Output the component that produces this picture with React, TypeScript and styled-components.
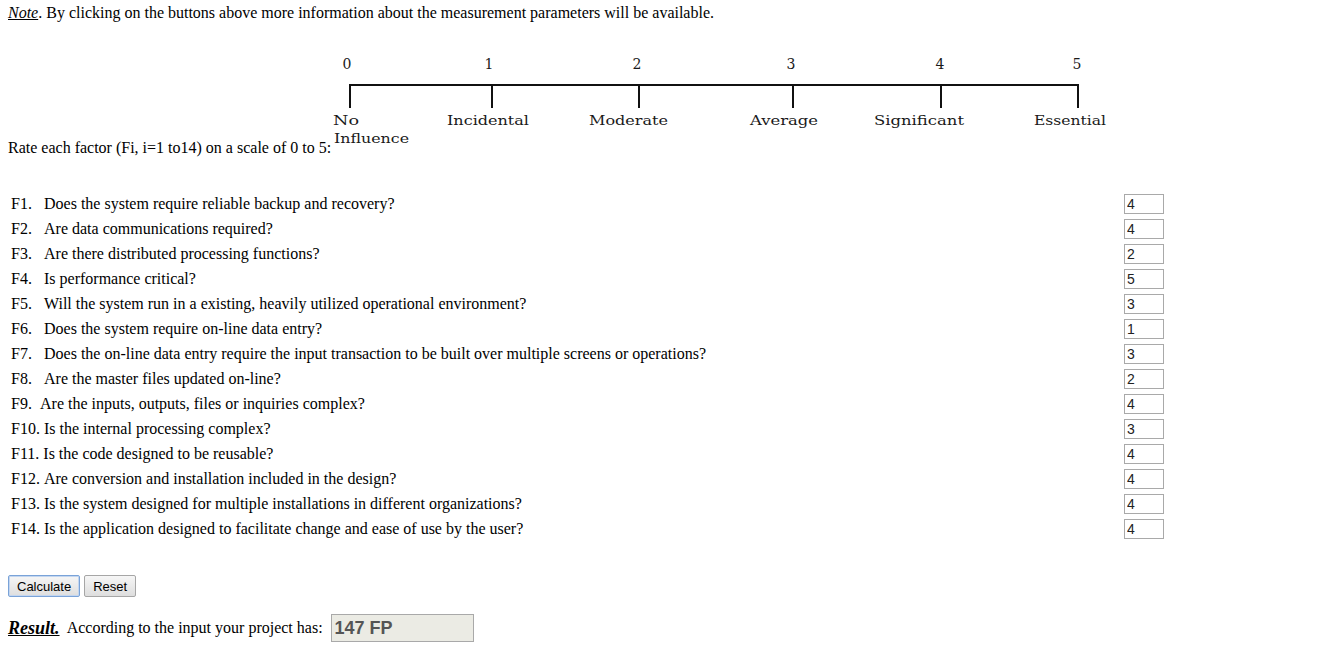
import React from "react";
import styled, { createGlobalStyle } from "styled-components";

const Global = createGlobalStyle`
  html, body { margin: 0; padding: 0; background: #fff; }
  body {
    padding: 4px 8px 0 8px;
    font-family: "Liberation Serif", "Times New Roman", serif;
    font-size: 16px;
    color: #000;
  }
`;

const Page = styled.div`
  width: 1322px;
`;

const Para = styled.p`
  margin: 0;
  line-height: normal;
`;

const NoteLabel = styled.span`
  font-style: italic;
  text-decoration: underline;
`;

const RateLine = styled.p`
  margin: 29px 0 0 0;
  line-height: normal;
  white-space: nowrap;
`;

const ScaleSvg = styled.svg`
  display: inline-block;
  vertical-align: baseline;
  overflow: visible;
`;

const ScaleText = styled.text<{ $size?: number }>`
  font-family: "DejaVu Serif", "Liberation Serif", serif;
  font-size: ${(p) => p.$size ?? 13}px;
  fill: #1a1a1a;
`;

const Factors = styled.div`
  margin-top: 34px;
  display: flex;
  flex-direction: column;
  width: 1156px;
`;

const Row = styled.div`
  display: grid;
  grid-template-columns: 1fr 40px;
  align-items: center;
  height: 25px;
  padding-left: 3px;
`;

const Question = styled.div`
  white-space: nowrap;
  line-height: normal;
`;

const Code = styled.span<{ $w?: number }>`
  display: inline-block;
  min-width: ${(p) => (p.$w ? `${p.$w}px` : "0")};
  padding-right: ${(p) => (p.$w ? "0" : "4px")};
`;

const ValueInput = styled.input`
  box-sizing: border-box;
  width: 40px;
  height: 20px;
  margin: 0;
  padding: 0 2px;
  border: 1px solid #a9a9a9;
  font-family: "Liberation Sans", Arial, sans-serif;
  font-size: 14px;
  color: #222;
  background: #fff;
  outline: none;
`;

const Buttons = styled.div`
  margin-top: 34px;
  display: flex;
  gap: 4px;
`;

const Button = styled.button<{ $focused?: boolean }>`
  box-sizing: border-box;
  height: 22px;
  padding: 0 8px;
  font-family: "Liberation Sans", Arial, sans-serif;
  font-size: 13px;
  color: #000;
  border-radius: 2px;
  border: 1px solid ${(p) => (p.$focused ? "#7aa3d8" : "#a6a6a6")};
  background: linear-gradient(#f6f6f6, #dedede);
  box-shadow: ${(p) => (p.$focused ? "0 0 0 1px #c3d6f0 inset" : "none")};
  cursor: pointer;
`;

const ResultRow = styled.div`
  margin-top: 17px;
  display: flex;
  align-items: center;
  white-space: pre;
`;

const ResultLabel = styled.span`
  font-weight: bold;
  font-style: italic;
  text-decoration: underline;
  font-size: 18px;
`;

const ResultBox = styled.div`
  box-sizing: border-box;
  margin-left: 8px;
  width: 143px;
  height: 28px;
  border: 1px solid #a9a9a9;
  background: #ebebe4;
  padding: 0 3px;
  display: flex;
  align-items: center;
  font-family: "Liberation Sans", Arial, sans-serif;
  font-weight: bold;
  font-size: 18px;
  color: #555;
`;

const factors: { code: string; w?: number; text: string; value: number }[] = [
  { code: "F1.", w: 33, text: "Does the system require reliable backup and recovery?", value: 4 },
  { code: "F2.", w: 33, text: "Are data communications required?", value: 4 },
  { code: "F3.", w: 33, text: "Are there distributed processing functions?", value: 2 },
  { code: "F4.", w: 33, text: "Is performance critical?", value: 5 },
  { code: "F5.", w: 33, text: "Will the system run in a existing, heavily utilized operational environment?", value: 3 },
  { code: "F6.", w: 33, text: "Does the system require on-line data entry?", value: 1 },
  { code: "F7.", w: 33, text: "Does the on-line data entry require the input transaction to be built over multiple screens or operations?", value: 3 },
  { code: "F8.", w: 33, text: "Are the master files updated on-line?", value: 2 },
  { code: "F9.", w: 29, text: "Are the inputs, outputs, files or inquiries complex?", value: 4 },
  { code: "F10.", text: "Is the internal processing complex?", value: 3 },
  { code: "F11.", text: "Is the code designed to be reusable?", value: 4 },
  { code: "F12.", text: "Are conversion and installation included in the design?", value: 4 },
  { code: "F13.", text: "Is the system designed for multiple installations in different organizations?", value: 4 },
  { code: "F14.", text: "Is the application designed to facilitate change and ease of use by the user?", value: 4 },
];

// positions relative to svg origin
const ticks = [19, 161, 308, 462, 610, 747];
const digits = [
  { c: 16, t: "0" },
  { c: 158, t: "1" },
  { c: 306, t: "2" },
  { c: 460, t: "3" },
  { c: 609, t: "4" },
  { c: 746, t: "5" },
];
const labels = [
  { x: 2, w: 26, y: 74, t: "No" },
  { x: 116, w: 82, y: 74, t: "Incidental" },
  { x: 258, w: 79, y: 74, t: "Moderate" },
  { x: 419, w: 68, y: 74, t: "Average" },
  { x: 543, w: 90, y: 74, t: "Significant" },
  { x: 703, w: 72, y: 74, t: "Essential" },
  { x: 3, w: 75, y: 92, t: "Influence" },
];

function Scale() {
  return (
    <ScaleSvg width={790} height={102} viewBox="0 0 790 102">
      {digits.map((d) => (
        <ScaleText key={d.t} $size={14} x={d.c} y={18} textAnchor="middle">
          {d.t}
        </ScaleText>
      ))}
      <line x1={18} y1={34} x2={748} y2={34} stroke="#111" strokeWidth={2} />
      {ticks.map((x) => (
        <line key={x} x1={x} y1={34} x2={x} y2={57} stroke="#111" strokeWidth={2} />
      ))}
      {labels.map((l) => (
        <ScaleText key={l.t} x={l.x} y={l.y} textLength={l.w} lengthAdjust="spacingAndGlyphs">
          {l.t}
        </ScaleText>
      ))}
    </ScaleSvg>
  );
}

export default function App() {
  return (
    <Page>
      <Global />
      <Para>
        <NoteLabel>Note</NoteLabel>. By clicking on the buttons above more information about the measurement parameters will be available.
      </Para>
      <RateLine>
        Rate each factor (Fi, i=1 to14) on a scale of 0 to 5:
        <Scale />
      </RateLine>
      <Factors>
        {factors.map((f) => (
          <Row key={f.code}>
            <Question>
              <Code $w={f.w}>{f.code}</Code>
              {f.text}
            </Question>
            <ValueInput type="text" defaultValue={String(f.value)} />
          </Row>
        ))}
      </Factors>
      <Buttons>
        <Button $focused>Calculate</Button>
        <Button>Reset</Button>
      </Buttons>
      <ResultRow>
        <ResultLabel>Result.</ResultLabel>
        {"  According to the input your project has:"}
        <ResultBox>147 FP</ResultBox>
      </ResultRow>
    </Page>
  );
}
